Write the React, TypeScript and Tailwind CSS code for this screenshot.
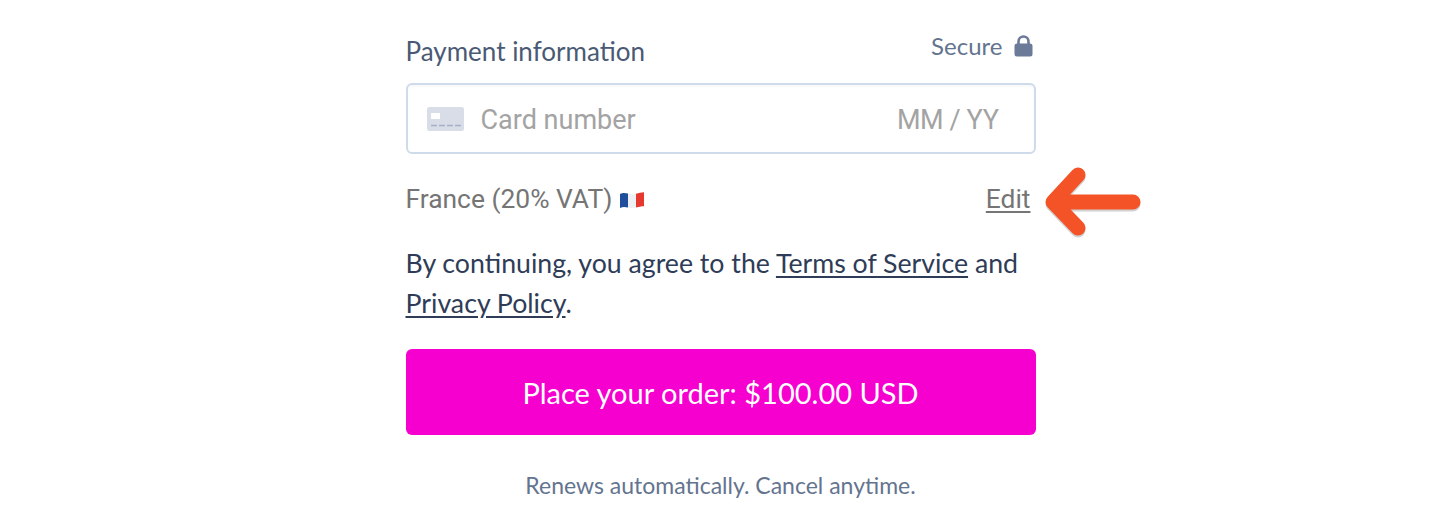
function CardIcon() {
  return (
    <svg width="37" height="24" viewBox="0 0 37 24" className="shrink-0">
      <rect width="37" height="24" rx="2.5" fill="#d9dde8" />
      <rect x="4" y="6" width="9" height="6" rx="0.5" fill="#ffffff" />
      <path d="M4 18.5h30" stroke="#a9b1c6" strokeWidth="1.6" strokeDasharray="6 2" />
    </svg>
  )
}

function LockIcon() {
  return (
    <svg width="19" height="22" viewBox="0 0 19 22">
      <path d="M4.5 10V6.5a5 5 0 0 1 10 0V10" fill="none" stroke="#6b7a99" strokeWidth="2.6" />
      <rect x="0.5" y="8.5" width="18" height="13" rx="2.5" fill="#6b7a99" />
    </svg>
  )
}

function Flag() {
  return (
    <svg width="24" height="18" viewBox="0 0 24 18" className="ml-2">
      <path d="M0 3c3-1.5 5-1.2 8-.4v14c-3-.8-5-1-8 .4z" fill="#1f4f9c" />
      <path d="M8 2.6c3 .8 5 1 8 .2V16.6c-3 .8-5 .8-8 0z" fill="#eef0f4" />
      <path d="M16 2.8c3-.8 5-1.6 8-1.6v14c-3 0-5 .6-8 1.4z" fill="#e5392f" />
    </svg>
  )
}

function Arrow() {
  return (
    <svg width="104" height="80" viewBox="0 0 104 80" className="absolute left-[638px] top-[-19px]">
      <path
        d="M34 12 L9 39 L34 65 M9 39 H89"
        transform="translate(0 2)"
        fill="none"
        stroke="#000000"
        strokeOpacity="0.18"
        strokeWidth="15"
        strokeLinecap="round"
        strokeLinejoin="round"
      />
      <path
        d="M34 12 L9 39 L34 65 M9 39 H89"
        fill="none"
        stroke="#f35327"
        strokeWidth="15"
        strokeLinecap="round"
        strokeLinejoin="round"
      />
    </svg>
  )
}

export default function App() {
  return (
    <main className="flex h-[530px] justify-center overflow-hidden bg-white font-['Lato','Liberation_Sans',sans-serif]">
      <section className="ml-[1px] w-[630px] pt-[31px]">
        <div className="flex items-start justify-between pr-[3px]">
          <h2 className="text-[26px] leading-[40px] text-[#4a5a75]">Payment information</h2>
          <div className="flex items-center gap-[11px] pt-[3px] text-[24px] leading-[24px] text-[#64748f]">
            Secure
            <LockIcon />
          </div>
        </div>
        <div className="mt-[12px] flex h-[71px] items-center rounded-[6px] border-2 border-[#cfdbea] bg-white pl-[19px] pr-[35px] font-['Roboto',sans-serif] text-[27px] text-[#a3a3a3] shadow-[inset_0_2px_3px_rgba(0,0,0,0.03)]">
          <CardIcon />
          <span className="ml-[17px] mt-[3px] flex-1">Card number</span>
          <span className="mt-[3px] tracking-[-0.4px]">MM / YY</span>
        </div>
        <div className="relative mt-[28px] flex h-[36px] items-center justify-between pr-[5px] font-['Roboto',sans-serif] text-[26.4px] text-[#757575]">
          <div className="flex items-center">
            France (20% VAT)
            <Flag />
          </div>
          <a className="underline underline-offset-[3px]">Edit</a>
          <Arrow />
        </div>
        <p className="mt-[25px] text-[26.7px] leading-[40px] text-[#2f3c57]">
          By continuing, you agree to the <a className="underline underline-offset-[3px]">Terms of Service</a> and
          <br />
          <a className="underline underline-offset-[3px]">Privacy Policy</a>.
        </p>
        <button className="mt-[26px] flex h-[86px] w-full items-center justify-center rounded-[6px] bg-[#f500cf] pt-[2px] text-[29px] text-white">
          Place your order: $100.00 USD
        </button>
        <p className="mt-[35px] text-center text-[23px] leading-[30px] text-[#64748f]">
          Renews automatically. Cancel anytime.
        </p>
      </section>
    </main>
  )
}
